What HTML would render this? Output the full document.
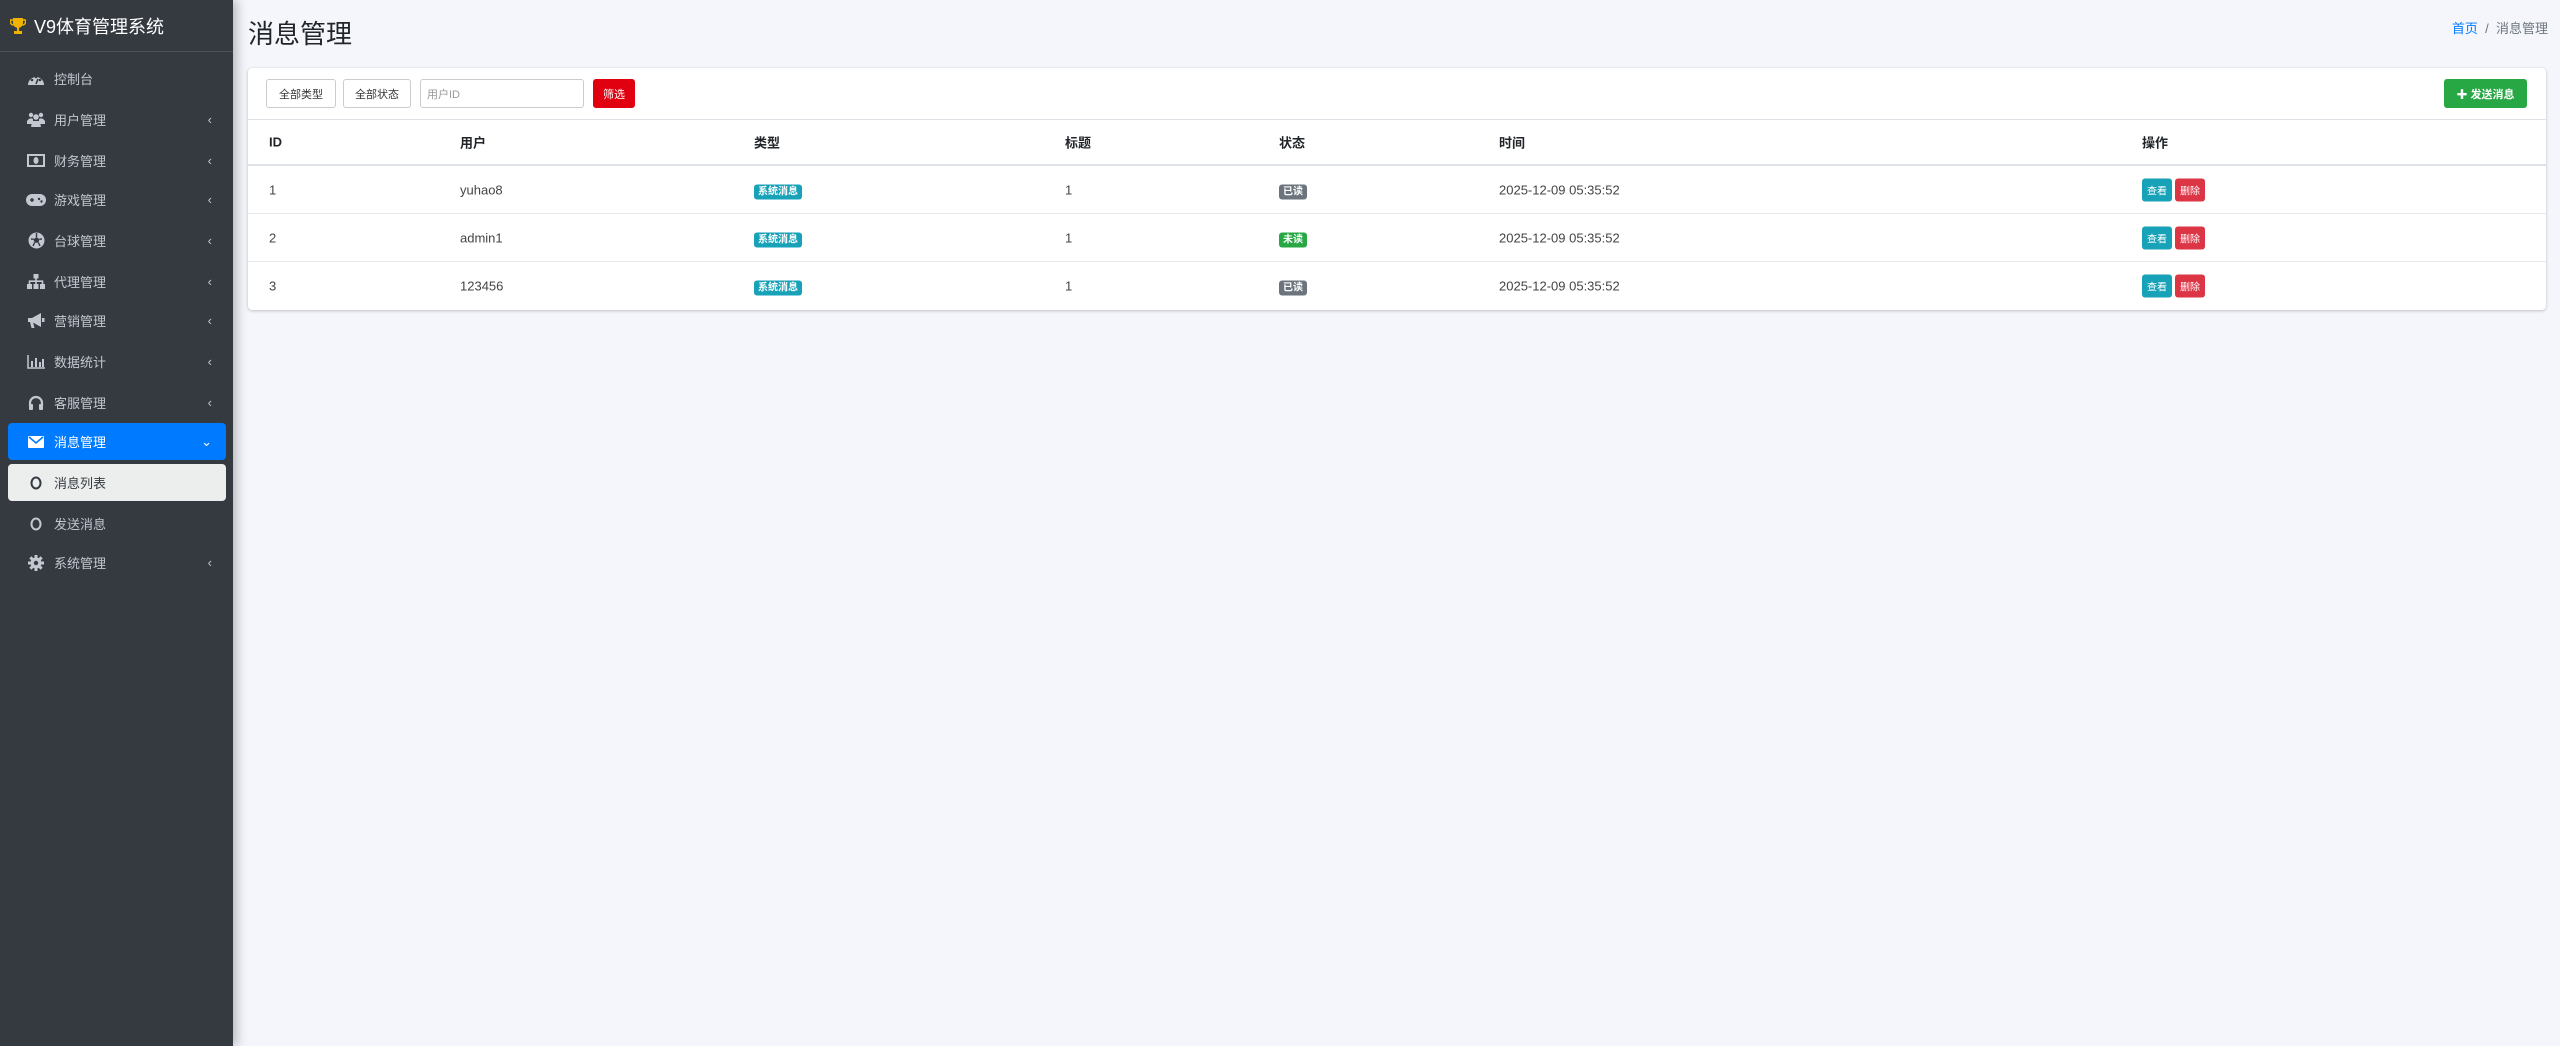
<!DOCTYPE html>
<html><head><meta charset="utf-8"><style>
*{box-sizing:border-box;margin:0;padding:0}
body{width:2560px;height:1046px;overflow:hidden;background:#f4f6fb;font-family:"Liberation Sans","Noto Sans CJK SC",sans-serif;color:#212529;position:relative}
.sb{position:absolute;left:0;top:0;width:233px;height:1046px;background:#343a40;box-shadow:4px 0 10px rgba(0,0,0,.25)}
.brand{height:52px;border-bottom:1px solid #4b545c;display:flex;align-items:center;padding-left:10px;color:#fff;font-size:18px}
.brand span{margin-left:8px}
.it{position:absolute;left:8px;width:218px;height:37px;display:flex;align-items:center;color:#c2c7d0;font-size:13px;border-radius:4px}
.it .ic{width:20px;margin-left:18px;margin-right:8px;display:flex;justify-content:center;align-items:center}
.it .ch{position:absolute;right:14px;font-size:13px}
.it.act{background:#007bff;color:#fff}
.it.sub{background:#eceeee;color:#343a40}
.main{position:absolute;left:233px;top:0;right:0}
h1{position:absolute;left:15px;top:14px;font-size:26px;font-weight:400;color:#212529}
.bc{position:absolute;right:12px;top:18px;font-size:13px;color:#6c757d}
.bc a{color:#007bff;text-decoration:none}
.card{position:absolute;left:15px;top:68px;width:2298px;height:242px;background:#fff;border-radius:4px;box-shadow:0 0 1px rgba(0,0,0,.13),0 1px 3px rgba(0,0,0,.2)}
.tb{height:52px;border-bottom:1px solid #dee2e6;position:relative}
.btn{position:absolute;top:11px;height:29px;border:1px solid #ccc;border-radius:3px;font-size:11px;display:flex;align-items:center;justify-content:center;color:#333;background:#fff}
.row{position:absolute;left:0;right:0;border-bottom:1px solid #e9ecef;font-size:13px;color:#444}
.row div{position:absolute;top:50%;transform:translateY(-50%)}
.hd{font-weight:700;color:#212529;border-bottom:2px solid #dee2e6}
.bd{font-size:10px;color:#fff;padding:2px 4px;border-radius:3px;font-weight:700}
.ab{font-size:10px;color:#fff;display:inline-block;padding:4px 5px;border-radius:3px;margin-right:3px}
</style></head><body>
<div class="sb">
<div class="brand"><svg width="16" height="18" viewBox="0 0 16 18"><path d="M3 1h10v5a5 5 0 0 1-10 0z" fill="#f0b400"/><path d="M3 3H0.5v2a3 3 0 0 0 3 3M13 3h2.5v2a3 3 0 0 1-3 3" stroke="#f0b400" stroke-width="1.5" fill="none"/><rect x="7" y="10" width="2" height="4" fill="#f0b400"/><rect x="4" y="14" width="8" height="3" fill="#f0b400"/></svg><span>V9体育管理系统</span></div>
<div class="it" style="top:60px"><span class="ic"><svg width="18" height="14" viewBox="0 0 18 14"><path d="M1 13A8 8 0 1 1 17 13z" fill="#c2c7d0"/><circle cx="5" cy="8" r="1.3" fill="#343a40"/><circle cx="9" cy="5" r="1.3" fill="#343a40"/><circle cx="13" cy="8" r="1.3" fill="#343a40"/><path d="M9 12l2-5" stroke="#343a40" stroke-width="1.6"/></svg></span>控制台</div>
<div class="it" style="top:101px"><span class="ic"><svg width="18" height="15" viewBox="0 0 18 15"><circle cx="4" cy="3" r="2.2" fill="#c2c7d0"/><circle cx="14" cy="3" r="2.2" fill="#c2c7d0"/><circle cx="9" cy="5" r="2.8" fill="#c2c7d0"/><path d="M0 11a4 4 0 0 1 6-4v5H0zM18 11a4 4 0 0 0-6-4v5h6zM4 15a5 5 0 0 1 10 0z" fill="#c2c7d0"/><rect x="4.5" y="9" width="9" height="6" rx="2" fill="#c2c7d0"/></svg></span>用户管理<span class="ch">‹</span></div>
<div class="it" style="top:142px"><span class="ic"><svg width="18" height="13" viewBox="0 0 18 13"><rect x="1" y="1" width="16" height="11" fill="none" stroke="#c2c7d0" stroke-width="2"/><ellipse cx="9" cy="6.5" rx="2.5" ry="3.5" fill="#c2c7d0"/></svg></span>财务管理<span class="ch">‹</span></div>
<div class="it" style="top:181px"><span class="ic"><svg width="20" height="12" viewBox="0 0 20 12"><rect x="0" y="0" width="20" height="12" rx="6" fill="#c2c7d0"/><path d="M4 6h4M6 4v4" stroke="#343a40" stroke-width="1.5"/><circle cx="13" cy="5" r="1.2" fill="#343a40"/><circle cx="15.5" cy="7.5" r="1.2" fill="#343a40"/></svg></span>游戏管理<span class="ch">‹</span></div>
<div class="it" style="top:222px"><span class="ic"><svg width="17" height="17" viewBox="0 0 17 17"><circle cx="8.5" cy="8.5" r="8" fill="#c2c7d0"/><path d="M8.5 5l3 2.2-1.1 3.5H6.6L5.5 7.2z" fill="#343a40"/><path d="M8.5 1v4M14 7l-2.5.2M12 14l-1.6-3.3M5 14l1.6-3.3M3 7l2.5.2" stroke="#343a40" stroke-width="1.4"/></svg></span>台球管理<span class="ch">‹</span></div>
<div class="it" style="top:263px"><span class="ic"><svg width="18" height="15" viewBox="0 0 18 15"><rect x="6.5" y="0" width="5" height="4.5" fill="#c2c7d0"/><rect x="0" y="10" width="5" height="5" fill="#c2c7d0"/><rect x="6.5" y="10" width="5" height="5" fill="#c2c7d0"/><rect x="13" y="10" width="5" height="5" fill="#c2c7d0"/><path d="M9 4.5v5.5M2.5 10V7.2h13V10" stroke="#c2c7d0" stroke-width="1.6" fill="none"/></svg></span>代理管理<span class="ch">‹</span></div>
<div class="it" style="top:302px"><span class="ic"><svg width="18" height="16" viewBox="0 0 18 16"><path d="M1 5h4l9-5v14L5 9H1z" fill="#c2c7d0"/><path d="M3 9l1.5 6h3L6 9" fill="#c2c7d0"/><rect x="15" y="5" width="2.5" height="4" fill="#c2c7d0"/></svg></span>营销管理<span class="ch">‹</span></div>
<div class="it" style="top:343px"><span class="ic"><svg width="18" height="14" viewBox="0 0 18 14"><path d="M1 0v13h17" stroke="#c2c7d0" stroke-width="1.5" fill="none"/><rect x="4" y="6" width="2" height="6" fill="#c2c7d0"/><rect x="8" y="3" width="2" height="9" fill="#c2c7d0"/><rect x="12" y="7" width="2" height="5" fill="#c2c7d0"/><rect x="15" y="4" width="2" height="8" fill="#c2c7d0"/></svg></span>数据统计<span class="ch">‹</span></div>
<div class="it" style="top:384px"><span class="ic"><svg width="16" height="16" viewBox="0 0 16 16"><path d="M2 11V8a6 6 0 0 1 12 0v3" stroke="#c2c7d0" stroke-width="2.2" fill="none"/><rect x="1" y="9" width="4" height="6" rx="1" fill="#c2c7d0"/><rect x="11" y="9" width="4" height="6" rx="1" fill="#c2c7d0"/></svg></span>客服管理<span class="ch">‹</span></div>
<div class="it act" style="top:423px"><span class="ic"><svg width="16" height="12"><rect width="16" height="12" rx="1" fill="#fff"/><path d="M1 1l7 6 7-6" stroke="#007bff" stroke-width="1.6" fill="none"/></svg></span>消息管理<span class="ch">⌄</span></div>
<div class="it sub" style="top:464px"><span class="ic"><svg width="12" height="14"><ellipse cx="6" cy="7" rx="4.5" ry="5.5" stroke="#343a40" stroke-width="2" fill="none"/></svg></span>消息列表</div>
<div class="it" style="top:505px"><span class="ic"><svg width="12" height="14"><ellipse cx="6" cy="7" rx="4.5" ry="5.5" stroke="#c2c7d0" stroke-width="2" fill="none"/></svg></span>发送消息</div>
<div class="it" style="top:544px"><span class="ic"><svg width="16" height="16" viewBox="0 0 16 16"><g fill="#c2c7d0"><circle cx="8" cy="8" r="5.5"/><rect x="6.5" y="0" width="3" height="16"/><rect x="0" y="6.5" width="16" height="3"/><rect x="6.5" y="0" width="3" height="16" transform="rotate(45 8 8)"/><rect x="6.5" y="0" width="3" height="16" transform="rotate(-45 8 8)"/></g><circle cx="8" cy="8" r="2.2" fill="#343a40"/></svg></span>系统管理<span class="ch">‹</span></div>
</div>
<div class="main">
<h1>消息管理</h1>
<div class="bc"><a>首页</a> &nbsp;/&nbsp; 消息管理</div>
<div class="card">
<div class="tb">
<div class="btn" style="left:18px;width:70px">全部类型</div>
<div class="btn" style="left:95px;width:68px">全部状态</div>
<div class="btn" style="left:172px;width:164px;justify-content:flex-start;padding-left:6px;color:#999">用户ID</div>
<div class="btn" style="left:345px;width:42px;background:#e0000f;border-color:#e0000f;color:#fff">筛选</div>
<div class="btn" style="left:2196px;width:83px;background:#28a745;border-color:#28a745;color:#fff;font-weight:700">✚ 发送消息</div>
</div>
<div class="row hd" style="top:52px;height:46px"><div style="left:21px">ID</div><div style="left:212px">用户</div><div style="left:506px">类型</div><div style="left:817px">标题</div><div style="left:1031px">状态</div><div style="left:1251px">时间</div><div style="left:1894px">操作</div></div>
<div class="row" style="top:98px;height:48px"><div style="left:21px">1</div><div style="left:212px">yuhao8</div><div style="left:506px"><span class="bd" style="background:#17a2b8">系统消息</span></div><div style="left:817px">1</div><div style="left:1031px"><span class="bd" style="background:#6c757d">已读</span></div><div style="left:1251px">2025-12-09 05:35:52</div><div style="left:1894px"><span class="ab" style="background:#17a2b8">查看</span><span class="ab" style="background:#dc3545">删除</span></div></div>
<div class="row" style="top:146px;height:48px"><div style="left:21px">2</div><div style="left:212px">admin1</div><div style="left:506px"><span class="bd" style="background:#17a2b8">系统消息</span></div><div style="left:817px">1</div><div style="left:1031px"><span class="bd" style="background:#28a745">未读</span></div><div style="left:1251px">2025-12-09 05:35:52</div><div style="left:1894px"><span class="ab" style="background:#17a2b8">查看</span><span class="ab" style="background:#dc3545">删除</span></div></div>
<div class="row" style="top:194px;height:48px;border:0"><div style="left:21px">3</div><div style="left:212px">123456</div><div style="left:506px"><span class="bd" style="background:#17a2b8">系统消息</span></div><div style="left:817px">1</div><div style="left:1031px"><span class="bd" style="background:#6c757d">已读</span></div><div style="left:1251px">2025-12-09 05:35:52</div><div style="left:1894px"><span class="ab" style="background:#17a2b8">查看</span><span class="ab" style="background:#dc3545">删除</span></div></div>
</div>
</div>
</body></html>
